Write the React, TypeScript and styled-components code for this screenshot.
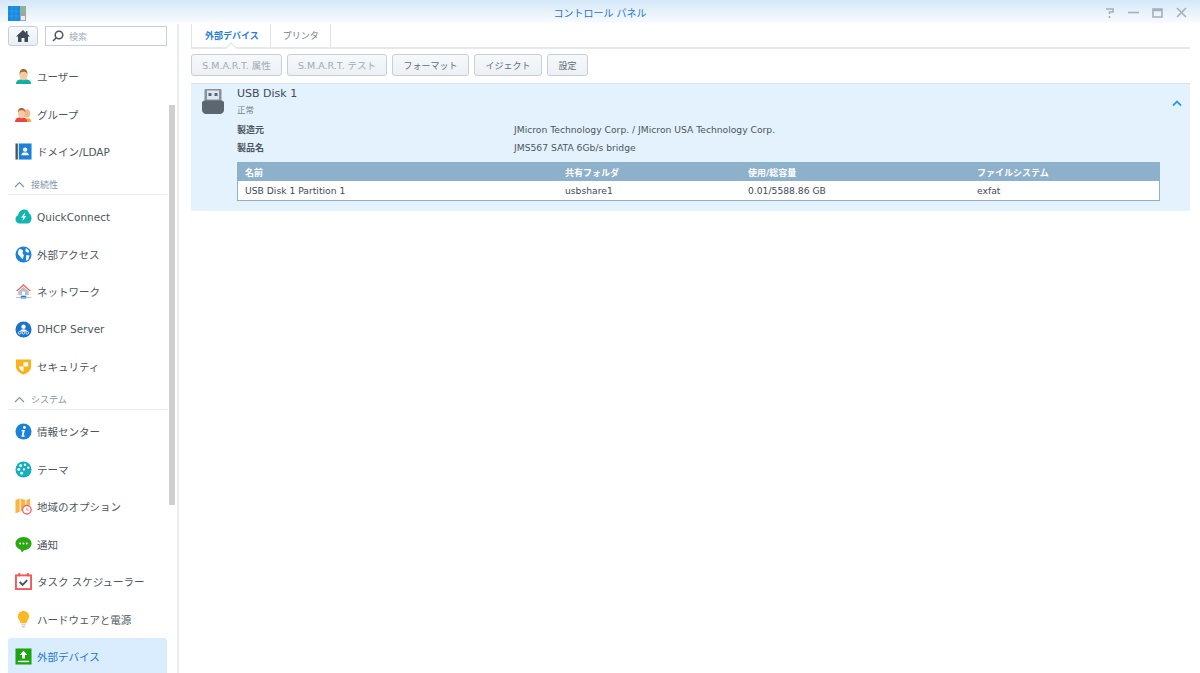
import styled, { createGlobalStyle } from 'styled-components';
import { ReactNode } from 'react';

const GlobalStyle = createGlobalStyle`
  html, body {
    margin: 0;
    height: 100%;
    overflow: hidden;
    background: #fff;
  }
  * {
    box-sizing: border-box;
  }
  body {
    font-family: 'DejaVu Sans', 'Noto Sans CJK JP', sans-serif;
    color: #414b55;
  }
`;

const Window = styled.div`
  width: 1200px;
  height: 673px;
  display: flex;
  flex-direction: column;
  overflow: hidden;
`;

const TitleBar = styled.header`
  height: 24px;
  flex: none;
  display: flex;
  align-items: center;
  justify-content: space-between;
  padding: 0 12px 0 8px;
  background: linear-gradient(#d5e8f8, #f6fafe 90%, #fff);
  position: relative;
`;

const AppIcon = styled.svg`
  width: 18px;
  height: 15px;
  margin-top: 3px;
`;

const WindowTitle = styled.div`
  position: absolute;
  left: 0;
  right: 0;
  text-align: center;
  font-size: 10px;
  color: #1f76c9;
`;

const WindowControls = styled.div`
  display: flex;
  gap: 11px;
  align-items: center;
`;

const ControlIcon = styled.svg`
  width: 13px;
  height: 13px;
  fill: none;
  stroke: #a3afba;
  stroke-width: 1.6;
`;

const Body = styled.div`
  flex: 1;
  display: flex;
  min-height: 0;
`;

const Sidebar = styled.aside`
  width: 179px;
  flex: none;
  border-right: 2px solid #e8ecef;
  padding: 2px 0 0 8px;
  position: relative;
  overflow: hidden;
`;

const SearchRow = styled.div`
  display: flex;
  gap: 7px;
  width: 159px;
`;

const HomeButton = styled.button`
  width: 30px;
  height: 20px;
  padding: 0;
  display: flex;
  align-items: center;
  justify-content: center;
  border: 1px solid #c6d0da;
  border-radius: 3px;
  background: linear-gradient(#f8fbfd, #e9eff4);
`;

const SearchBox = styled.div`
  flex: 1;
  height: 20px;
  display: flex;
  align-items: center;
  gap: 5px;
  padding-left: 6px;
  border: 1px solid #c6d0da;
  font-size: 9px;
  color: #a5aeb7;
`;

const NavList = styled.nav`
  width: 159px;
  margin-top: 12px;
`;

const NavItem = styled.div<{ $active?: boolean }>`
  height: 37.5px;
  display: flex;
  align-items: center;
  gap: 5px;
  padding-left: 7px;
  font-size: 10.5px;
  white-space: nowrap;
  border-radius: 3px 3px 0 0;
  color: ${(props) => (props.$active ? '#1f76c9' : '#4d5660')};
  background: ${(props) => (props.$active ? '#d9edfe' : 'transparent')};
`;

const IconBox = styled.span`
  width: 17px;
  height: 17px;
  flex: none;
  display: flex;
  align-items: center;
  justify-content: center;

  svg {
    width: 100%;
    height: 100%;
  }
`;

const SectionHead = styled.div`
  height: 24px;
  margin-bottom: 3.5px;
  display: flex;
  align-items: center;
  gap: 6px;
  padding: 4px 0 0 6px;
  font-size: 9px;
  color: #7f96ab;
  border-bottom: 1px solid #e4ebf2;
`;

const ScrollThumb = styled.div`
  position: absolute;
  left: 169px;
  top: 81px;
  width: 6px;
  height: 400px;
  background: #cfcfcf;
`;

const Main = styled.main`
  flex: 1;
  min-width: 0;
  padding: 0 10px 0 12px;
`;

const TabBar = styled.div`
  height: 25px;
  display: flex;
  border-bottom: 2px solid #e6e9ec;
  position: relative;
`;

const Tab = styled.div<{ $active?: boolean }>`
  height: 23px;
  display: flex;
  align-items: center;
  padding: 0 11px 0 ${(props) => (props.$active ? '13px' : '12px')};
  font-size: 9px;
  border-right: 1px solid #dfe3e7;
  border-left: ${(props) => (props.$active ? '1px solid #dfe3e7' : 'none')};
  color: ${(props) => (props.$active ? '#2a7fd4' : '#717b85')};
  font-weight: ${(props) => (props.$active ? 600 : 400)};
`;

const TabNotch = styled.span`
  position: absolute;
  left: 36px;
  bottom: -5px;
  width: 8px;
  height: 8px;
  background: #fff;
  border-top: 1px solid #e0e4e8;
  border-left: 1px solid #e0e4e8;
  transform: rotate(45deg);
`;

const Toolbar = styled.div`
  display: flex;
  gap: 5px;
  margin-top: 5px;
`;

const ToolButton = styled.button<{ $disabled?: boolean; $width: number }>`
  width: ${(props) => props.$width}px;
  height: 22px;
  padding: 0;
  font-family: inherit;
  font-size: ${(props) => (props.$disabled ? '9.5px' : '9px')};
  border: 1px solid #c6d0da;
  border-radius: 3px;
  background: linear-gradient(#f6f9fb, #ecf0f4);
  color: ${(props) => (props.$disabled ? '#a3abb3' : '#636d77')};
  white-space: nowrap;
`;

const DiskPanel = styled.section`
  margin-top: 7px;
  height: 128px;
  background: #e3f2fd;
  border-top: 1px solid #d3e2ed;
  display: flex;
  padding: 5px 8px 0 11px;
`;

const DiskIcon = styled.svg`
  width: 22px;
  height: 25px;
  flex: none;
`;

const DiskContent = styled.div`
  flex: 1;
  min-width: 0;
  margin-left: 13px;
`;

const DiskTitle = styled.div`
  font-size: 11px;
  line-height: 14px;
  margin-top: -2px;
  color: #414b55;
`;

const DiskStatus = styled.div`
  font-size: 8.5px;
  line-height: 12px;
  margin-top: 3px;
  color: #77818b;
`;

const InfoRow = styled.div`
  display: grid;
  grid-template-columns: 277px 1fr;
  height: 18px;
  align-items: center;
  font-size: 9.2px;
  color: #4d5660;
`;

const InfoLabel = styled.div`
  font-weight: 600;
  font-size: 9px;
`;

const InfoRows = styled.div`
  margin-top: 4px;
`;

const Table = styled.div`
  margin-top: 6px;
  border: 1px solid #8db0cb;
`;

const TableRow = styled.div<{ $head?: boolean }>`
  display: grid;
  grid-template-columns: 320px 183px 229px 1fr;
  padding-left: 7px;
  height: ${(props) => (props.$head ? '18px' : '19px')};
  align-items: center;
  font-size: ${(props) => (props.$head ? '9px' : '9.2px')};
  font-weight: ${(props) => (props.$head ? 600 : 400)};
  color: ${(props) => (props.$head ? '#fff' : '#414b55')};
  background: ${(props) => (props.$head ? '#8db0cb' : '#fff')};
`;

const Collapse = styled.svg`
  width: 10px;
  height: 7px;
  flex: none;
  margin: 11px 0 0 12px;
  fill: none;
  stroke: #2f9be8;
  stroke-width: 1.8;
`;

const Chevron = () => (
  <svg width="11" height="7" viewBox="0 0 11 7" fill="none" stroke="#7f96ab" strokeWidth="1.2">
    <path d="M1 6l4.5-4.5L10 6" />
  </svg>
);

const UserIcon = ({ shirt, hair }: { shirt: string; hair: string }) => (
  <svg viewBox="0 0 18 18">
    <path d="M1 17c0-4 3-5 8-5s8 1 8 5z" fill={shirt} />
    <ellipse cx="9" cy="7.500" rx="4.200" ry="5.500" fill="#f5c9a2" />
    <path d="M4.800 7C4.500 2.800 6.500 1 9 1s4.500 1.800 4.200 6C12.500 4.500 11 4 9 4S5.500 4.500 4.800 7z" fill={hair} />
  </svg>
);

const GroupIcon = () => (
  <svg viewBox="0 0 18 18">
    <path d="M11 17c0-3 2-4 3-4s3 1 3 4z" fill="#f5a623" />
    <ellipse cx="12.500" cy="8" rx="3.500" ry="4.500" fill="#efb98c" />
    <path d="M0 17c0-4 3-5 6.500-5s6.500 1 6.500 5z" fill="#e84545" />
    <ellipse cx="7" cy="8" rx="3.800" ry="5" fill="#f5c9a2" />
    <path d="M3 7C3 3 5 2 7 2s4 1 4 5c-1-2-2-2.500-4-2.500S4 5 3 7z" fill="#a0673a" />
  </svg>
);

const DomainIcon = () => (
  <svg viewBox="0 0 18 18">
    <rect x="0.500" y="0.500" width="2.500" height="17" fill="#4a5560" />
    <rect x="4" y="0.500" width="13.500" height="17" fill="#1a82d8" />
    <circle cx="10.700" cy="7" r="2.300" fill="#fff" />
    <path d="M6.700 13c0-2.500 1.800-3 4-3s4 .5 4 3z" fill="#fff" />
  </svg>
);

const CloudIcon = () => (
  <svg viewBox="0 0 18 18">
    <path d="M5 16.500C2.300 16.500.5 14.600.5 12c0-2 1-3.500 2.700-4.200C3.700 4.300 6.300 1.500 9.800 1.500c3 0 5 2 5.400 4.600 1.500.9 2.300 2.700 2.300 4.700 0 3.200-1.900 5.700-5 5.700z" fill="#12b5b0" />
    <path d="M11 4.500L6.300 10h2.600l-1.100 3.800 4.400-5.300H9.600z" fill="#fff" />
  </svg>
);

const GlobeIcon = () => (
  <svg viewBox="0 0 18 18">
    <circle cx="9" cy="9" r="8.500" fill="#1a82d8" />
    <path d="M5 3l3.500 1.500-.5 3L9.500 10l-1.500 4-2.500-3L3 8.500 3.500 5zM11.500 2l3.500 3-1 2.500-3-2zM12 9.500l3.500.5-1.500 4.500-2.500 1z" fill="#fff" />
  </svg>
);

const HouseIcon = () => (
  <svg viewBox="0 0 18 18">
    <path d="M9 1L1 8.500h2L9 3l6 5.500h2z" fill="#f0615f" />
    <path d="M3.500 9L9 4l5.500 5v4h-11z" fill="#b4bfc7" />
    <rect x="7.500" y="9" width="3" height="4" fill="#fff" />
    <rect x="6" y="13.500" width="6" height="3" rx="1" fill="#1a82d8" />
    <rect x="1" y="15" width="16" height="1" fill="#aeb8c0" />
  </svg>
);

const DhcpIcon = () => (
  <svg viewBox="0 0 18 18">
    <circle cx="9" cy="9" r="8.500" fill="#1a74c8" />
    <circle cx="9" cy="6" r="2.300" fill="#fff" />
    <path d="M5.500 11c0-1.500 1.500-2.200 3.500-2.200s3.500.7 3.500 2.200z" fill="#fff" />
    <g fill="none" stroke="#fff" strokeWidth=".8">
      <circle cx="5" cy="12.500" r="1.400" />
      <circle cx="9" cy="12.500" r="1.400" />
      <circle cx="13" cy="12.500" r="1.400" />
    </g>
  </svg>
);

const ShieldIcon = () => (
  <svg viewBox="0 0 18 18">
    <path d="M1 1.500h16v7.500c0 4-3.500 7-8 8.500C4.500 16 1 13 1 9z" fill="#f8b21a" />
    <path d="M9 4.500h5v4.500H9zM9 9v5.500C6.500 13.500 4.300 11.500 4 9z" fill="#fff" />
  </svg>
);

const InfoIcon = () => (
  <svg viewBox="0 0 18 18">
    <circle cx="9" cy="9" r="8.500" fill="#1a82d8" />
    <circle cx="10" cy="4.800" r="1.500" fill="#fff" />
    <path d="M7 7.500h3.500l-1.400 5.700h1.300l-.3 1.300H6.800l1.300-5.700H6.800z" fill="#fff" />
  </svg>
);

const PaletteIcon = () => (
  <svg viewBox="0 0 18 18">
    <circle cx="9" cy="9" r="8.500" fill="#12b0ba" />
    <g fill="#fff">
      <circle cx="6" cy="5" r="1.500" />
      <circle cx="10.500" cy="4" r="1.300" />
      <circle cx="4" cy="9" r="1.500" />
      <circle cx="14" cy="7" r="1.300" />
      <circle cx="7" cy="13" r="1.500" />
      <circle cx="9.500" cy="9" r="1.200" />
    </g>
  </svg>
);

const MapClockIcon = () => (
  <svg viewBox="0 0 18 18">
    <path d="M.5 2L5 .5v14l-4.500 2zM6 .5l5 1.500V9l-5 5.500zM12 2L16 .5V8h-4z" fill="#f8b444" />
    <circle cx="12.500" cy="12.500" r="4.500" fill="#fff" stroke="#ef6a6a" strokeWidth="1.500" />
    <path d="M12.500 10.500v2l2 .5" fill="none" stroke="#ef6a6a" />
  </svg>
);

const BubbleIcon = () => (
  <svg viewBox="0 0 18 18">
    <path d="M9 1c4.700 0 8.500 3 8.500 7s-3.800 7-8 7l-2 2.500L6 14.500C3 13.500.5 11 .5 8 .5 4 4.300 1 9 1z" fill="#2ba70f" />
    <g fill="#fff">
      <circle cx="5.500" cy="8" r="1" />
      <circle cx="9" cy="8" r="1" />
      <circle cx="12.500" cy="8" r="1" />
    </g>
  </svg>
);

const CalendarIcon = () => (
  <svg viewBox="0 0 18 18">
    <rect x="1" y="2.500" width="16" height="14.500" fill="#fff" stroke="#ef5a5a" strokeWidth="2" />
    <rect x="3.500" y="0" width="2" height="3.500" fill="#ef5a5a" />
    <rect x="12.500" y="0" width="2" height="3.500" fill="#ef5a5a" />
    <path d="M5 9.500l3 3 5-5" fill="none" stroke="#4a5560" strokeWidth="2" />
  </svg>
);

const BulbIcon = () => (
  <svg viewBox="0 0 18 18">
    <path d="M9 0c3.500 0 6 2.500 6 5.500 0 3-2.500 4.500-3 7.500H6C5.500 10 3 8.500 3 5.500 3 2.500 5.500 0 9 0z" fill="#fbb926" />
    <rect x="6.500" y="13.500" width="5" height="2" fill="#d8dde1" />
    <rect x="7.500" y="16" width="3" height="1.500" fill="#c3c9ce" />
  </svg>
);

const UploadIcon = () => (
  <svg viewBox="0 0 18 18">
    <rect x="0.500" y="0.500" width="17" height="17" fill="#1ea311" />
    <path d="M9 3l4 4.500h-2.500V11h-3V7.500H5z" fill="#fff" />
    <rect x="3" y="13.500" width="12" height="1.500" fill="#fff" />
  </svg>
);

const navGroups: { title?: string; items: { label: string; icon: ReactNode; active?: boolean }[] }[] = [
  {
    items: [
      { label: 'ユーザー', icon: <UserIcon shirt="#12b0a0" hair="#a0673a" /> },
      { label: 'グループ', icon: <GroupIcon /> },
      { label: 'ドメイン/LDAP', icon: <DomainIcon /> },
    ],
  },
  {
    title: '接続性',
    items: [
      { label: 'QuickConnect', icon: <CloudIcon /> },
      { label: '外部アクセス', icon: <GlobeIcon /> },
      { label: 'ネットワーク', icon: <HouseIcon /> },
      { label: 'DHCP Server', icon: <DhcpIcon /> },
      { label: 'セキュリティ', icon: <ShieldIcon /> },
    ],
  },
  {
    title: 'システム',
    items: [
      { label: '情報センター', icon: <InfoIcon /> },
      { label: 'テーマ', icon: <PaletteIcon /> },
      { label: '地域のオプション', icon: <MapClockIcon /> },
      { label: '通知', icon: <BubbleIcon /> },
      { label: 'タスク スケジューラー', icon: <CalendarIcon /> },
      { label: 'ハードウェアと電源', icon: <BulbIcon /> },
      { label: '外部デバイス', icon: <UploadIcon />, active: true },
    ],
  },
];

const toolButtons = [
  { label: 'S.M.A.R.T. 属性', width: 91, disabled: true },
  { label: 'S.M.A.R.T. テスト', width: 100, disabled: true },
  { label: 'フォーマット', width: 77 },
  { label: 'イジェクト', width: 68 },
  { label: '設定', width: 41 },
];

const App = () => {
  return (
    <Window>
      <GlobalStyle />
      <TitleBar>
        <AppIcon viewBox="0 0 18 15">
          <rect width="12" height="15" fill="#1a8ae0" />
          <path d="M0 5h12M0 10h12M4 0v15M8 0v15" stroke="#3ba4ee" strokeWidth=".5" />
          <rect x="12" width="6" height="15" fill="#9aa6b0" />
          <rect x="13" y="3" width="4" height="3" fill="#7fc66a" />
          <rect x="13" y="10" width="4" height="4" fill="#e8edf1" />
        </AppIcon>
        <WindowTitle>コントロール パネル</WindowTitle>
        <WindowControls>
          <ControlIcon viewBox="0 0 13 13">
            <path d="M3 3h7v3H6.500v2M6.500 10v2" />
          </ControlIcon>
          <ControlIcon viewBox="0 0 13 13">
            <path d="M1 6.500h11" />
          </ControlIcon>
          <ControlIcon viewBox="0 0 13 13">
            <path d="M2 3h9v8H2zM2 4.500h9" />
          </ControlIcon>
          <ControlIcon viewBox="0 0 13 13">
            <path d="M2 2l9 9M11 2l-9 9" />
          </ControlIcon>
        </WindowControls>
      </TitleBar>
      <Body>
        <Sidebar>
          <SearchRow>
            <HomeButton aria-label="home">
              <svg width="14" height="14" viewBox="0 0 14 14" fill="#3f4a55">
                <path d="M7 1L0 7.500h2V13h3.500V9h3v4H12V7.500h2l-2.500-2.400V2H10v1.700z" />
              </svg>
            </HomeButton>
            <SearchBox>
              <svg width="12" height="12" viewBox="0 0 12 12" fill="none" stroke="#4a5560" strokeWidth="1.500">
                <circle cx="7" cy="5" r="3.800" />
                <path d="M4.200 7.800L1 11" />
              </svg>
              検索
            </SearchBox>
          </SearchRow>
          <NavList>
            {navGroups.map((group) => (
              <div key={group.title ?? 'top'}>
                {group.title && (
                  <SectionHead>
                    <Chevron />
                    {group.title}
                  </SectionHead>
                )}
                {group.items.map((item) => (
                  <NavItem key={item.label} $active={item.active}>
                    <IconBox>{item.icon}</IconBox>
                    {item.label}
                  </NavItem>
                ))}
              </div>
            ))}
          </NavList>
          <ScrollThumb />
        </Sidebar>
        <Main>
          <TabBar>
            <Tab $active>外部デバイス</Tab>
            <Tab>プリンタ</Tab>
            <TabNotch />
          </TabBar>
          <Toolbar>
            {toolButtons.map((button) => (
              <ToolButton key={button.label} $width={button.width} $disabled={button.disabled}>
                {button.label}
              </ToolButton>
            ))}
          </Toolbar>
          <DiskPanel>
            <DiskIcon viewBox="0 0 22 25">
              <path d="M3.500 0h15a1 1 0 0 1 1 1v11h-17V1a1 1 0 0 1 1-1z" fill="#87929b" />
              <rect x="5" y="1.500" width="12" height="9" fill="#dfe8ee" />
              <rect x="6.500" y="4" width="3" height="3" fill="#5b6670" />
              <rect x="12.500" y="4" width="3" height="3" fill="#5b6670" />
              <path d="M2 11.500h18l2 1.500v8c0 2.200-1.800 4-4 4H4c-2.200 0-4-1.800-4-4v-8z" fill="#5b6670" />
            </DiskIcon>
            <DiskContent>
              <DiskTitle>USB Disk 1</DiskTitle>
              <DiskStatus>正常</DiskStatus>
              <InfoRows>
                <InfoRow>
                  <InfoLabel>製造元</InfoLabel>
                  <div>JMicron Technology Corp. / JMicron USA Technology Corp.</div>
                </InfoRow>
                <InfoRow>
                  <InfoLabel>製品名</InfoLabel>
                  <div>JMS567 SATA 6Gb/s bridge</div>
                </InfoRow>
              </InfoRows>
              <Table>
                <TableRow $head>
                  <div>名前</div>
                  <div>共有フォルダ</div>
                  <div>使用/総容量</div>
                  <div>ファイルシステム</div>
                </TableRow>
                <TableRow>
                  <div>USB Disk 1 Partition 1</div>
                  <div>usbshare1</div>
                  <div>0.01/5588.86 GB</div>
                  <div>exfat</div>
                </TableRow>
              </Table>
            </DiskContent>
            <Collapse viewBox="0 0 10 7">
              <path d="M1 5.500L5 1.500l4 4" />
            </Collapse>
          </DiskPanel>
        </Main>
      </Body>
    </Window>
  );
};

export default App;
